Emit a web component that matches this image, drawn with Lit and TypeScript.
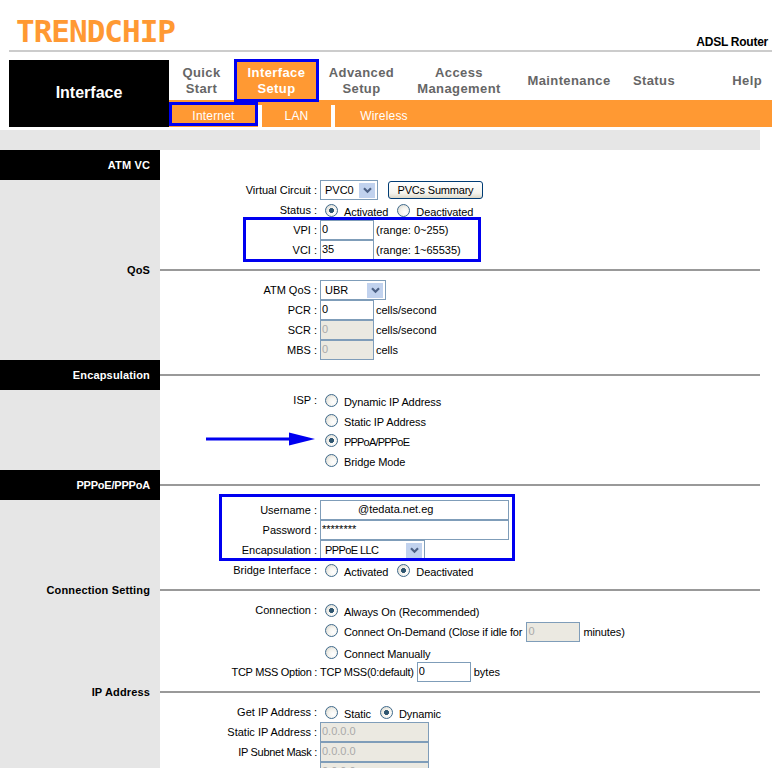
import { LitElement, html, css, svg } from "lit";
import { customElement } from "lit/decorators.js";

const chevron = svg`<svg width="9" height="7" viewBox="0 0 9 7"><path d="M1 1.2 L4.5 4.7 L8 1.2" fill="none" stroke="#4d6185" stroke-width="2.2"/></svg>`;

@customElement("app-root")
export class AppRoot extends LitElement {
  static styles = css`
    :host { display: block; width: 772px; height: 768px; overflow: hidden; position: relative; background: #fff;
      font: 11px/14px "Liberation Sans", Arial, sans-serif; color: #000; }
    .top { height: 50px; display: flex; justify-content: space-between; align-items: flex-end; padding: 0 4px 0 7px; border-bottom: 2px solid #ccc; margin-left: 9px; }
    .logo { font: bold 31px/32px "DejaVu Sans Mono", monospace; color: #f93; letter-spacing: -1px; padding-bottom: 3px; }
    .model { font: bold 12px/14px "Liberation Sans", Arial, sans-serif; letter-spacing: -0.25px; padding-bottom: 1px; }
    .nav { display: flex; margin: 8px 0 0 9px; height: 67px; }
    .brand { width: 160px; flex: none; background: #000; color: #fff; font: bold 16px/20px "Liberation Sans", Arial, sans-serif; display: flex; align-items: center; justify-content: center; padding-bottom: 2px; box-sizing: border-box; }
    .navmain { flex: 1; display: flex; flex-direction: column; }
    .tabs { display: grid; grid-template-columns: 65px 85px 85px 110px 110px 60px 1fr; height: 40px; }
    .tab { display: flex; align-items: center; justify-content: center; text-align: center; padding-top: 1px; font: bold 13px/16px "Liberation Sans", Arial, sans-serif; letter-spacing: 0.4px; color: #666; }
    .tab.active { background: #f93; color: #fff; }
    .tab.end { justify-content: flex-end; padding-right: 10px; }
    .subs { display: flex; height: 27px; background: #f93; }
    .sub { color: #fff; font: 12px/22px "Liberation Sans", Arial, sans-serif; letter-spacing: 0.2px; text-align: center; margin-top: 5px; height: 22px; }
    .sub.s1 { width: 89px; margin-right: 4px; }
    .sub.s2 { width: 69px; margin-right: 4px; }
    .sub.s3 { width: 98px; }
    .sep { width: 4px; background: #fff; margin: 5px 0 0 -4px; }
    .band { height: 20px; width: 760px; margin-top: 3px; background: #e6e6e6; }
    .row { display: flex; }
    .side { width: 160px; flex: none; background: #e6e6e6; box-sizing: border-box; padding-right: 10px; text-align: right; font-weight: bold; letter-spacing: 0.15px; display: flex; align-items: center; justify-content: flex-end; }
    .side.dark { background: #000; color: #fff; }
    .side.tight { letter-spacing: -0.2px; }
    .rule { width: 600px; height: 2px; background: #999; align-self: center; }
    .h20 { height: 20px; }
    .h22 { height: 22px; }
    .h30 { height: 30px; }
    .label { width: 160px; flex: none; box-sizing: border-box; padding-right: 3px; text-align: right; line-height: 20px; }
    .label.tight { letter-spacing: -0.3px; }
    .value { display: flex; align-items: center; white-space: pre; }
    input[type="text"] { box-sizing: border-box; height: 20px; width: 54px; margin: 0; padding: 0 1px 2px; border: 1px solid #7f9db9; background: #fff; color: #000; font: 11px "Liberation Sans", Arial, sans-serif; border-radius: 0; outline: none; }
    input[disabled] { background: #ebe9e1; color: #aaa; }
    input.wide { width: 189px; }
    input.user { padding-left: 37px; }
    input.ip { width: 109px; }
    input.idle { margin: 2px 3px 0 0; }
    input.mss { margin: 0 3px; }
    .unit { margin-left: 2px; }
    input[type="radio"] { appearance: none; width: 13px; height: 13px; margin: 0 6px 0 5px; flex: none; border-radius: 50%; box-sizing: border-box; border: 1px solid #3f6a8c; background: radial-gradient(circle at 65% 65%, #fff 0, #f4f3ee 45%, #d2d0c6 100%); }
    input[type="radio"]:checked { background: radial-gradient(circle at 50% 50%, #2f5670 0, #2f5670 2.2px, transparent 2.8px), radial-gradient(circle at 65% 65%, #fff 0, #f4f3ee 45%, #d2d0c6 100%); }
    .rt { padding-top: 4px; margin-right: 4px; letter-spacing: -0.1px; }
    .tight-text { letter-spacing: -0.14px; }
    .mss-text { letter-spacing: -0.25px; }
    .tighter-text { letter-spacing: -0.8px; }
    .value.lift input[type="radio"] { margin-bottom: 2px; }
    .value.lift .rt { padding-top: 2px; }
    .select { box-sizing: border-box; height: 20px; border: 1px solid #7f9db9; display: flex; align-items: center; justify-content: space-between; padding: 0 2px 0 4px; background: #fff; font-size: 11px; }
    .select.vc { width: 58px; }
    .select.qos { width: 66px; }
    .select.enc { width: 105px; letter-spacing: -0.6px; }
    .arrow { width: 16px; height: 15px; background: #c1d2ee; display: flex; align-items: center; justify-content: center; }
    button { box-sizing: border-box; width: 95px; height: 18px; margin: 0 0 0 10px; padding: 0; border: 1px solid #003c74; border-radius: 3px; background: linear-gradient(#fff, #f4f4ee 70%, #dcd8c8); color: #000; font: 11px "Liberation Sans", Arial, sans-serif; letter-spacing: -0.2px; }
    .mark { position: absolute; box-sizing: border-box; border: 3px solid #0000f0; pointer-events: none; }
    .m1 { left: 234px; top: 59px; width: 85px; height: 43px; }
    .m2 { left: 169px; top: 102px; width: 89px; height: 24px; }
    .m3 { left: 243px; top: 217px; width: 238px; height: 45px; }
    .m4 { left: 219px; top: 494px; width: 296px; height: 67px; }
    .pointer { position: absolute; left: 205px; top: 431px; }
  `;

  private head(text: string, h: number, dark: boolean, rule = true, tight = false) {
    return html`<div class="row h${h}">
      <div class="side ${dark ? "dark" : ""} ${tight ? "tight" : ""}">${text}</div>
      ${rule ? html`<div class="rule"></div>` : ""}
    </div>`;
  }

  private field(label: string, content: unknown, h = 20, extra = "", labelCls = "") {
    return html`<div class="row h${h}">
      <div class="side"></div>
      <div class="label ${labelCls}">${label ? `${label} :` : ""}</div>
      <div class="value ${extra}">${content}</div>
    </div>`;
  }

  private radio(text: string, name: string, checked = false, cls = "") {
    return html`<input type="radio" name=${name} ?checked=${checked} /><span class="rt ${cls}">${text}</span>`;
  }

  private select(cls: string, text: string) {
    return html`<span class="select ${cls}">${text}<span class="arrow">${chevron}</span></span>`;
  }

  render() {
    return html`
      <div class="top">
        <div class="logo">TRENDCHIP</div>
        <div class="model">ADSL Router</div>
      </div>
      <div class="nav">
        <div class="brand">Interface</div>
        <div class="navmain">
          <div class="tabs">
            <div class="tab">Quick<br />Start</div>
            <div class="tab active">Interface<br />Setup</div>
            <div class="tab">Advanced<br />Setup</div>
            <div class="tab">Access<br />Management</div>
            <div class="tab">Maintenance</div>
            <div class="tab">Status</div>
            <div class="tab end">Help</div>
          </div>
          <div class="subs">
            <div class="sub s1">Internet</div><div class="sep"></div>
            <div class="sub s2">LAN</div><div class="sep"></div>
            <div class="sub s3">Wireless</div>
          </div>
        </div>
      </div>
      <div class="band"></div>

      ${this.head("ATM VC", 30, true, false)}
      ${this.field("Virtual Circuit", html`${this.select("vc", "PVC0")}<button>PVCs Summary</button>`)}
      ${this.field("Status", html`${this.radio("Activated", "st", true)}${this.radio("Deactivated", "st")}`)}
      ${this.field("VPI", html`<input type="text" value="0" /><span class="unit">(range: 0~255)</span>`)}
      ${this.field("VCI", html`<input type="text" value="35" /><span class="unit">(range: 1~65535)</span>`)}

      ${this.head("QoS", 20, false)}
      ${this.field("ATM QoS", this.select("qos", "UBR"))}
      ${this.field("PCR", html`<input type="text" value="0" /><span class="unit">cells/second</span>`)}
      ${this.field("SCR", html`<input type="text" value="0" disabled /><span class="unit">cells/second</span>`)}
      ${this.field("MBS", html`<input type="text" value="0" disabled /><span class="unit">cells</span>`)}

      ${this.head("Encapsulation", 30, true)}
      ${this.field("ISP", this.radio("Dynamic IP Address", "isp"))}
      ${this.field("", this.radio("Static IP Address", "isp"))}
      ${this.field("", this.radio("PPPoA/PPPoE", "isp", true, "tighter-text"))}
      ${this.field("", this.radio("Bridge Mode", "isp"))}

      ${this.head("PPPoE/PPPoA", 30, true, true, true)}
      ${this.field("Username", html`<input class="wide user" type="text" value="@tedata.net.eg" />`)}
      ${this.field("Password", html`<input class="wide" type="text" value="********" />`)}
      ${this.field("Encapsulation", this.select("enc", "PPPoE LLC"))}
      ${this.field("Bridge Interface", html`${this.radio("Activated", "br")}${this.radio("Deactivated", "br", true)}`)}

      ${this.head("Connection Setting", 20, false)}
      ${this.field("Connection", this.radio("Always On (Recommended)", "cn", true))}
      ${this.field("", html`${this.radio("Connect On-Demand (Close if idle for", "cn", false, "tight-text")}<input class="idle" type="text" value="0" disabled /><span class="rt">minutes)</span>`, 22, "lift")}
      ${this.field("", this.radio("Connect Manually", "cn"))}
      ${this.field("TCP MSS Option", html`<span class="mss-text">TCP MSS(0:default)</span><input class="mss" type="text" value="0" />bytes`, 20, "", "tight")}

      ${this.head("IP Address", 20, false)}
      ${this.field("Get IP Address", html`${this.radio("Static", "ip")}${this.radio("Dynamic", "ip", true)}`)}
      ${this.field("Static IP Address", html`<input class="ip" type="text" value="0.0.0.0" disabled />`)}
      ${this.field("IP Subnet Mask", html`<input class="ip" type="text" value="0.0.0.0" disabled />`, 20, "", "tight")}
      ${this.field("", html`<input class="ip" type="text" value="0.0.0.0" disabled />`)}

      <div class="mark m1"></div>
      <div class="mark m2"></div>
      <div class="mark m3"></div>
      <div class="mark m4"></div>
      <svg class="pointer" width="112" height="16" viewBox="0 0 112 16">
        <path d="M1 6.5 L84 6.5 L84 1.5 L110 8 L84 14.5 L84 9.5 L1 9.5 Z" fill="#0000f0"/>
      </svg>
    `;
  }
}
